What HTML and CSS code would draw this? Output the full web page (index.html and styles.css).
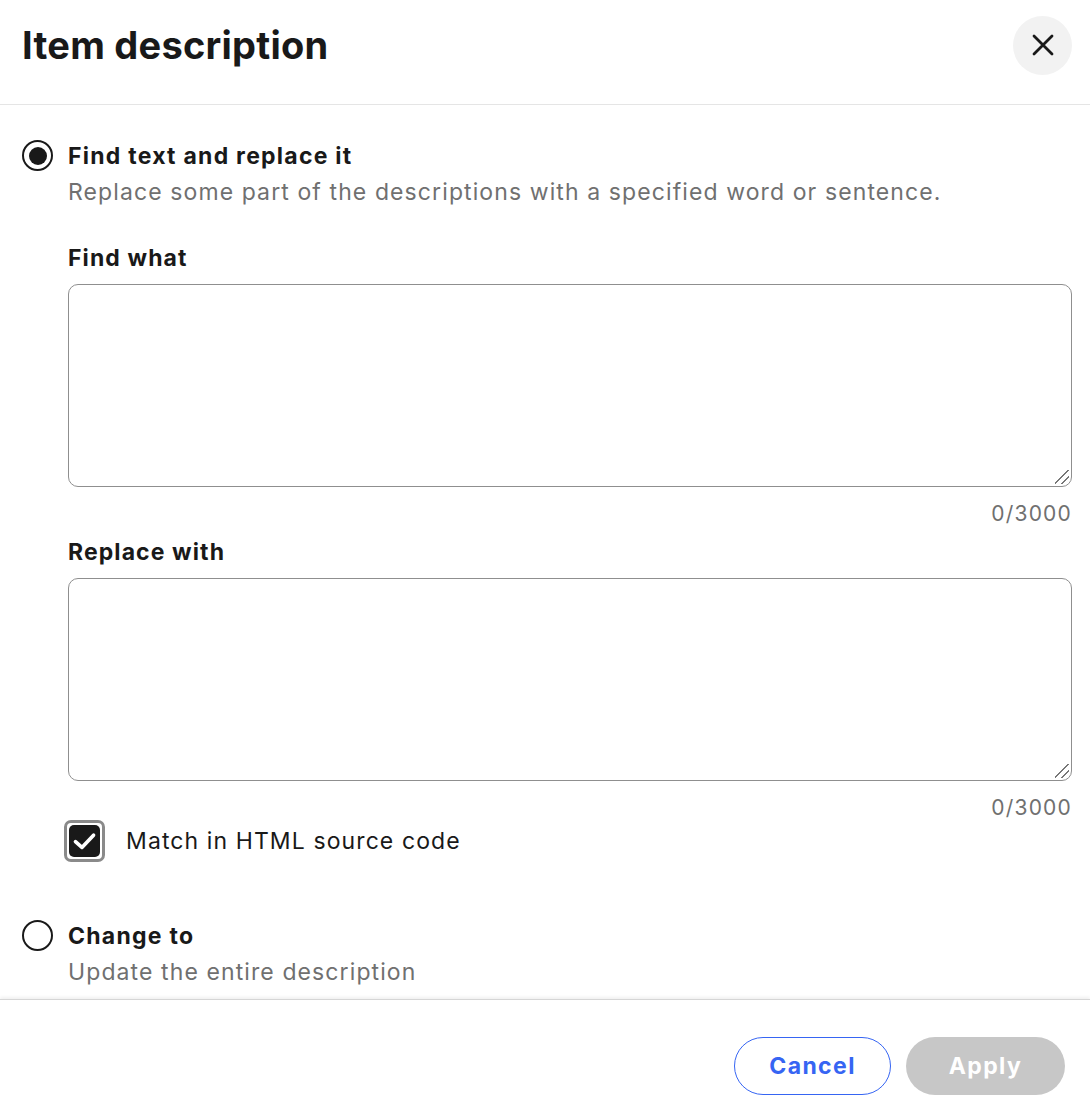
FILE: index.html
```html
<!DOCTYPE html>
<html lang="en">
<head>
<meta charset="utf-8">
<title>Item description</title>
<link rel="stylesheet" href="styles.css">
</head>
<body>
<div class="dialog">
  <header class="head">
    <h1 class="title">Item description</h1>
    <button class="close" aria-label="Close">
      <svg width="24" height="24" viewBox="0 0 24 24"><path d="M3 3 L21 21 M21 3 L3 21" stroke="#191919" stroke-width="2.8" stroke-linecap="round" fill="none"/></svg>
    </button>
  </header>
  <main class="body">
    <div class="option">
      <span class="radio checked"><span class="dot"></span></span>
      <div class="opt-text">
        <div class="opt-title">Find text and replace it</div>
        <div class="opt-desc">Replace some part of the descriptions with a specified word or sentence.</div>
        <div class="field first">
          <label class="field-label">Find what</label>
          <div class="ta"><span class="grip"></span></div>
          <div class="count">0/3000</div>
        </div>
        <div class="field">
          <label class="field-label">Replace with</label>
          <div class="ta"><span class="grip"></span></div>
          <div class="count">0/3000</div>
        </div>
        <div class="check-row">
          <span class="checkbox">
            <svg width="24" height="24" viewBox="0 0 24 24"><path d="M5 12.5 L10 17 L19 7.5" stroke="#fff" stroke-width="2.8" fill="none" stroke-linecap="round" stroke-linejoin="round"/></svg>
          </span>
          <span class="check-label">Match in HTML source code</span>
        </div>
      </div>
    </div>
    <div class="option second">
      <span class="radio"></span>
      <div class="opt-text">
        <div class="opt-title">Change to</div>
        <div class="opt-desc">Update the entire description</div>
      </div>
    </div>
  </main>
  <footer class="foot">
    <button class="btn cancel">Cancel</button>
    <button class="btn apply">Apply</button>
  </footer>
</div>
</body>
</html>
```

FILE: styles.css
```css
* { box-sizing: border-box; }
html, body { margin: 0; padding: 0; background: #fff; }
body {
  font-family: Inter, "Noto Sans", "Liberation Sans", sans-serif;
  color: #191919;
  width: 1090px;
  height: 1114px;
  overflow: hidden;
}
.dialog { display: flex; flex-direction: column; height: 1114px; }
.head {
  display: flex;
  align-items: center;
  justify-content: space-between;
  height: 105px;
  padding: 0 18px 14px 22px;
  border-bottom: 1px solid #e5e5e5;
}
.title {
  margin: 0;
  font-size: 38px;
  font-weight: 700;
  letter-spacing: 0.25px;
  color: #191919;
}
.close {
  width: 59px;
  height: 59px;
  border-radius: 50%;
  border: none;
  background: #f2f2f2;
  display: flex;
  align-items: center;
  justify-content: center;
  padding: 0;
}
.body { padding: 35px 18px 0 22px; flex: 1; }
.option { display: flex; gap: 15px; }
.option.second { margin-top: 58px; }
.radio {
  flex: none;
  width: 31px;
  height: 31px;
  border: 2px solid #191919;
  border-radius: 50%;
  margin-top: 0;
  display: flex;
  align-items: center;
  justify-content: center;
}
.radio .dot { width: 18px; height: 18px; border-radius: 50%; background: #191919; }
.opt-text { flex: 1; }
.opt-title { font-size: 23px; font-weight: 700; line-height: 33px; letter-spacing: 1.25px; }
.opt-desc { font-size: 23px; color: #707070; line-height: 38px; letter-spacing: 1.1px; }
.field { margin-top: 10px; }
.field.first { margin-top: 32px; }
.field-label { display: block; font-size: 23px; font-weight: 700; line-height: 30px; letter-spacing: 1.1px; margin-bottom: 11px; }
.ta {
  position: relative;
  height: 203px;
  border: 1px solid #8f8f8f;
  border-radius: 10px;
}
.grip {
  position: absolute;
  right: 2px;
  bottom: 2px;
  width: 14px;
  height: 14px;
  background: linear-gradient(135deg, transparent 45%, #777 45%, #777 52%, transparent 52%, transparent 70%, #777 70%, #777 77%, transparent 77%);
}
.count { text-align: right; font-size: 21px; color: #707070; line-height: 26px; margin-top: 14px; letter-spacing: 1.2px; }
.check-row { display: flex; align-items: center; gap: 21px; margin-top: -1px; margin-left: -4px; }
.checkbox {
  width: 41px;
  height: 42px;
  border: 3px solid #8a8a8a;
  border-radius: 7px;
  padding: 2px;
  display: flex;
}
.checkbox svg { width: 100%; height: 100%; background: #191919; border-radius: 5px; }
.check-label { font-size: 23px; color: #191919; letter-spacing: 1.1px; }
.foot {
  height: 115px;
  border-top: 1px solid #d6d6d6;
  box-shadow: 0 -2px 3px rgba(0,0,0,0.06);
  display: flex;
  justify-content: flex-end;
  align-items: center;
  gap: 15px;
  padding: 18px 25px 0 0;
}
.btn {
  height: 58px;
  border-radius: 29px;
  font-family: inherit;
  font-size: 23px;
  font-weight: 700;
  letter-spacing: 1.4px;
  padding: 0;
}
.cancel { width: 157px; background: #fff; color: #3665f3; border: 1px solid #3665f3; }
.apply { width: 159px; background: #c7c7c7; color: #fff; border: none; }
```
